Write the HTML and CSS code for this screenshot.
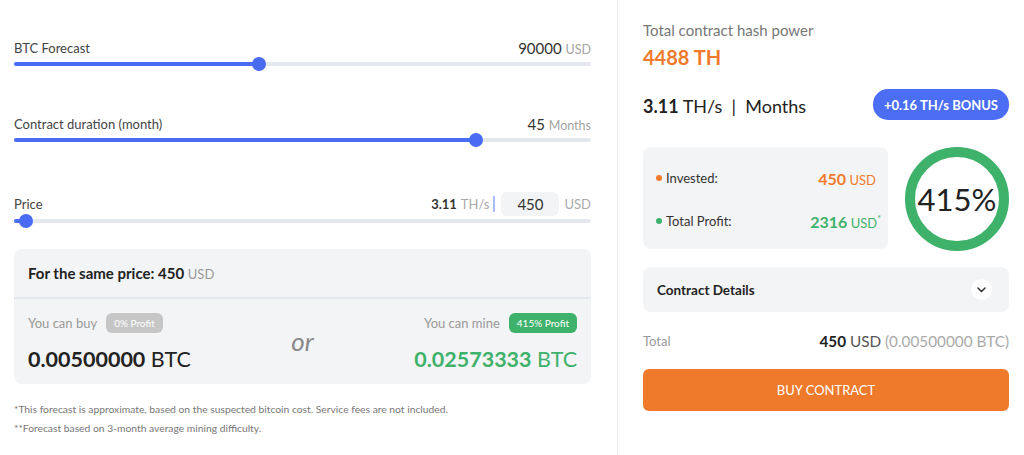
FILE: index.html
```html
<html lang="en"><head>
    <meta charset="UTF-8">
    <meta name="viewport" content="width=device-width, initial-scale=1.0">
    <title>Mining calculator</title>
    <link rel="stylesheet" href="styles.css">
</head>

<body>
    <div class="page">
        <!-- calculator column -->
        <section class="calc">
            <div class="field">
                <div class="field-head">
                    <span class="field-label">BTC Forecast</span>
                    <span class="field-value">90000 <small>USD</small></span>
                </div>
                <div class="range"><div class="range-fill" style="width: 42.5%"></div></div>
            </div>

            <div class="field">
                <div class="field-head">
                    <span class="field-label">Contract duration (month)</span>
                    <span class="field-value">45 <small>Months</small></span>
                </div>
                <div class="range"><div class="range-fill" style="width: 80%"></div></div>
            </div>

            <div class="field field-price">
                <div class="field-head">
                    <span class="field-label">Price</span>
                    <span class="price-box">
                        <b>3.11</b> <small>TH/s</small>
                        <i class="price-sep"></i>
                        <input type="text" class="price-input" value="450">
                        <small class="price-unit">USD</small>
                    </span>
                </div>
                <div class="range"><div class="range-fill" style="width: 2.1%"></div></div>
            </div>

            <!-- comparison -->
            <div class="compare">
                <div class="compare-head">For the same price: 450 <small>USD</small></div>
                <div class="compare-body">
                    <div class="option">
                        <div class="option-top">
                            <span>You can buy</span>
                            <span class="badge badge-gray">0% Profit</span>
                        </div>
                        <div class="option-amount"><b>0.00500000</b> BTC</div>
                    </div>
                    <div class="compare-or">or</div>
                    <div class="option option-right">
                        <div class="option-top">
                            <span>You can mine</span>
                            <span class="badge badge-green">415% Profit</span>
                        </div>
                        <div class="option-amount green"><b>0.02573333</b> BTC</div>
                    </div>
                </div>
            </div>

            <p class="note">*This forecast is approximate, based on the suspected bitcoin cost. Service fees are not included.</p>
            <p class="note">**Forecast based on 3-month average mining difficulty.</p>
        </section>

        <!-- summary column -->
        <section class="summary">
            <div class="hash-label">Total contract hash power</div>
            <div class="hash-value">4488 TH</div>

            <div class="speed-row">
                <div class="speed"><b>3.11</b> TH/s &nbsp;|&nbsp; Months</div>
                <button class="bonus">+0.16 TH/s BONUS</button>
            </div>

            <div class="result-row">
                <div class="result-box">
                    <div class="result-line">
                        <span class="result-name"><i class="dot dot-orange"></i>Invested:</span>
                        <span class="result-num orange"><b>450</b> USD</span>
                    </div>
                    <div class="result-line">
                        <span class="result-name"><i class="dot dot-green"></i>Total Profit:</span>
                        <span class="result-num green"><b>2316</b> USD<sup>*</sup></span>
                    </div>
                </div>
                <div class="ring">
                    <svg width="104" height="104" viewBox="0 0 104 104">
                        <circle cx="52" cy="52" r="47" fill="none" stroke="#3eb26b" stroke-width="10"></circle>
                    </svg>
                    <span class="ring-text">415%</span>
                </div>
            </div>

            <div class="details">
                <span>Contract Details</span>
                <span class="details-toggle">
                    <svg width="9" height="6" viewBox="0 0 9 6"><path d="M1 1l3.5 3.5L8 1" fill="none" stroke="#333" stroke-width="1.5" stroke-linecap="round" stroke-linejoin="round"></path></svg>
                </span>
            </div>

            <div class="total-row">
                <span class="total-label">Total</span>
                <span class="total-value"><b>450</b> USD <em>(0.00500000 BTC)</em></span>
            </div>

            <button class="buy">BUY CONTRACT</button>
        </section>
    </div>
</body></html>
```

FILE: styles.css
```css
body {
    font-family: Lato, "Open Sans", sans-serif;
    margin: 0;
    color: #333;
    background-color: #fff;
}

.page {
    display: flex;
    height: 455px;
}

/* left column */
.calc {
    display: flex;
    flex-direction: column;
    width: 577px;
    padding: 40px 26px 0 14px;
    border-right: 1px solid #ececec;
}

.field + .field {
    margin-top: 46px;
}

.field-head {
    display: flex;
    justify-content: space-between;
    align-items: center;
    height: 16px;
}

.field-price .field-head {
    height: 24px;
}

.field-label {
    font-size: 13px;
    color: #444;
}

.field-value {
    font-size: 15px;
    color: #333;
}

.field-value small {
    font-size: 12.5px;
    color: #a3a3a3;
}

.range {
    position: relative;
    height: 4px;
    margin: 6px 0 4px;
    background-color: #e4e8ee;
    border-radius: 2px;
}

.field-price .range {
    margin-top: 3px;
}

.range-fill {
    position: relative;
    height: 100%;
    background-color: #4a6cf5;
    border-radius: 2px;
}

.range-fill::after {
    content: "";
    position: absolute;
    right: -7px;
    top: -5px;
    width: 14px;
    height: 14px;
    border-radius: 50%;
    background-color: #4a6cf5;
}

.price-box {
    display: flex;
    align-items: center;
    font-size: 13px;
}

.price-box b {
    margin-right: 4px;
}

.price-box small {
    font-size: 13px;
    color: #aaa;
}

.price-sep {
    width: 2px;
    height: 16px;
    margin: 0 6px 0 4px;
    background-color: #a9bdf7;
}

.price-input {
    width: 58px;
    height: 24px;
    box-sizing: border-box;
    border: 0;
    border-radius: 6px;
    background-color: #f3f4f5;
    font-family: inherit;
    font-size: 15px;
    color: #333;
    text-align: center;
    padding: 0;
}

.price-unit {
    margin-left: 5px;
}

.compare {
    margin-top: 22px;
    background-color: #f3f4f5;
    border-radius: 8px;
}

.compare-head {
    height: 48px;
    line-height: 48px;
    padding: 0 14px;
    font-size: 15px;
    font-weight: bold;
    color: #222;
    border-bottom: 2px solid #e3e7ee;
}

.compare-head small {
    font-size: 13px;
    font-weight: normal;
    color: #999;
}

.compare-body {
    display: grid;
    grid-template-columns: 1fr auto 1fr;
    padding: 14px 14px 13px;
}

.option-top {
    display: flex;
    align-items: center;
    gap: 9px;
    height: 20px;
    font-size: 13px;
    color: #999;
}

.option-right .option-top {
    justify-content: flex-end;
}

.option-right {
    text-align: right;
}

.badge {
    height: 20px;
    line-height: 20px;
    padding: 0 8px;
    border-radius: 6px;
    font-size: 10px;
    color: #fff;
}

.badge-gray {
    background-color: #c6c6c6;
}

.badge-green {
    background-color: #3eb26b;
}

.option-amount {
    margin-top: 14px;
    line-height: 24px;
    font-size: 21.5px;
    color: #222;
}

.compare-or {
    align-self: center;
    font-size: 26px;
    font-style: italic;
    color: #888;
    padding-bottom: 2px;
}

.green {
    color: #3eb26b;
}

.orange {
    color: #f07a2b;
}

.note {
    margin: 0;
    font-size: 10.3px;
    line-height: 19px;
    color: #777;
}

.compare + .note {
    margin-top: 16px;
}

/* right column */
.summary {
    flex: 1;
    padding: 20px 15px 0 25px;
}

.hash-label {
    line-height: 20px;
    font-size: 15px;
    color: #777;
}

.hash-value {
    margin-top: 5px;
    line-height: 24px;
    font-size: 20px;
    font-weight: bold;
    color: #f07a2b;
}

.speed-row {
    display: flex;
    justify-content: space-between;
    align-items: center;
    margin-top: 20px;
}

.speed {
    font-size: 18px;
    color: #222;
    padding-top: 3px;
}

.bonus {
    height: 31px;
    padding: 0 11px;
    border: 0;
    border-radius: 15px;
    background-color: #4b6ef5;
    font-family: inherit;
    font-size: 13px;
    font-weight: bold;
    color: #fff;
}

.result-row {
    display: flex;
    justify-content: space-between;
    align-items: flex-start;
    margin-top: 27px;
}

.result-box {
    width: 245px;
    height: 102px;
    box-sizing: border-box;
    padding: 21px 12px 0 13px;
    background-color: #f3f4f5;
    border-radius: 8px;
}

.result-line {
    display: flex;
    justify-content: space-between;
    align-items: center;
    height: 20px;
    white-space: nowrap;
}

.result-line + .result-line {
    margin-top: 23px;
}

.result-name {
    display: flex;
    align-items: center;
    font-size: 13px;
    color: #333;
}

.dot {
    width: 6px;
    height: 6px;
    margin-right: 4px;
    border-radius: 50%;
}

.dot-orange {
    background-color: #f07a2b;
}

.dot-green {
    background-color: #3eb26b;
}

.result-num {
    font-size: 13px;
}

.result-num b {
    font-size: 16px;
}

.result-num sup {
    font-size: 9px;
    margin-right: -5px;
}

.ring {
    position: relative;
    width: 104px;
    height: 104px;
}

.ring svg {
    display: block;
}

.ring-text {
    position: absolute;
    left: 0;
    right: 0;
    top: 0;
    line-height: 104px;
    text-align: center;
    font-size: 31px;
    color: #222;
}

.details {
    display: flex;
    justify-content: space-between;
    align-items: center;
    height: 45px;
    margin-top: 16px;
    padding: 0 17px 0 14px;
    background-color: #f3f4f5;
    border-radius: 8px;
    font-size: 13.5px;
    font-weight: bold;
    color: #222;
}

.details-toggle {
    display: flex;
    align-items: center;
    justify-content: center;
    width: 21px;
    height: 21px;
    border-radius: 50%;
    background-color: #fff;
}

.total-row {
    display: flex;
    justify-content: space-between;
    align-items: center;
    height: 20px;
    margin-top: 19px;
}

.total-label {
    font-size: 13px;
    color: #999;
}

.total-value {
    font-size: 15.3px;
    color: #555;
}

.total-value b {
    color: #222;
}

.total-value em {
    font-style: normal;
    color: #aaa;
}

.buy {
    display: block;
    width: 100%;
    height: 42px;
    margin-top: 18px;
    border: 0;
    border-radius: 6px;
    background-color: #f07a2b;
    font-family: inherit;
    font-size: 13px;
    color: #fff;
}
```
